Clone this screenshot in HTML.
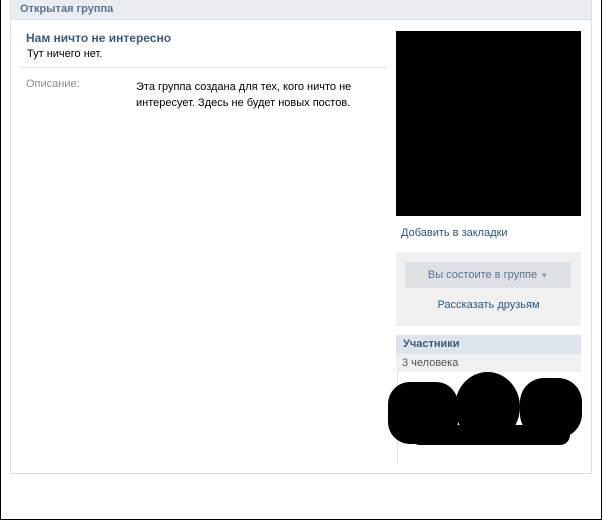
<!DOCTYPE html>
<html><head><meta charset="utf-8"><style>
*{margin:0;padding:0;box-sizing:border-box}
body{width:602px;height:520px;background:#fff;font-family:"Liberation Sans","Noto Sans CJK SC",sans-serif;font-size:11px;position:relative;overflow:hidden}
.a{position:absolute}
</style></head><body>
<div class="a" style="left:0;top:0;width:1px;height:520px;background:#000"></div>
<div class="a" style="left:601px;top:0;width:1px;height:520px;background:#000"></div>
<div class="a" style="left:0;top:519px;width:602px;height:1px;background:#000"></div>
<div class="a" style="left:10px;top:0;width:582px;height:474px;border:1px solid #dcdfe3;border-top:none"></div>
<div class="a" style="left:11px;top:0;width:580px;height:20px;background:#e9ecf0;border-bottom:1px solid #dfe3e8"></div>
<div class="a" style="left:20px;top:3px;color:#5c7390;font-weight:bold;font-size:11px">Открытая группа</div>
<div class="a" style="left:26px;top:31px;color:#3b5a7f;font-weight:bold;font-size:12px">Нам ничто не интересно</div>
<div class="a" style="left:27px;top:48px;color:#000">Тут ничего нет.</div>
<div class="a" style="left:20px;top:67px;width:367px;height:1px;background:#e6e8eb"></div>
<div class="a" style="left:26px;top:78px;color:#8a8f96">Описание:</div>
<div class="a" style="left:136px;top:79px;color:#000;line-height:16px;width:230px">Эта группа создана для тех, кого ничто не интересует. Здесь не будет новых постов.</div>
<div class="a" style="left:396px;top:31px;width:185px;height:185px;background:#000"></div>
<div class="a" style="left:401px;top:227px;color:#2b587a">Добавить в закладки</div>
<div class="a" style="left:396px;top:252px;width:185px;height:74px;background:#f0f0f0"></div>
<div class="a" style="left:405px;top:262px;width:166px;height:26px;background:#dde1e6;color:#5c7390;text-align:center;line-height:26px">Вы состоите в группе <span style="font-size:8px;color:#8a9aad">▼</span></div>
<div class="a" style="left:396px;top:299px;width:185px;text-align:center;color:#2b587a">Рассказать друзьям</div>
<div class="a" style="left:396px;top:335px;width:185px;height:19px;background:#dde4ec;color:#3b5a7f;font-weight:bold;padding:3px 7px">Участники</div>
<div class="a" style="left:396px;top:354px;width:185px;height:18px;background:#f0f0f0;color:#555;padding:3px 6px">3 человека</div>
<div class="a" style="left:397px;top:372px;width:1px;height:92px;background:#e0e0e0"></div>
<div class="a" style="left:388px;top:382px;width:70px;height:62px;background:#000;border-radius:22px"></div>
<div class="a" style="left:455px;top:372px;width:65px;height:70px;background:#000;border-radius:50%"></div>
<div class="a" style="left:520px;top:378px;width:62px;height:60px;background:#000;border-radius:24px"></div>
<div class="a" style="left:410px;top:425px;width:160px;height:20px;background:#000;border-radius:10px"></div>
</body></html>
